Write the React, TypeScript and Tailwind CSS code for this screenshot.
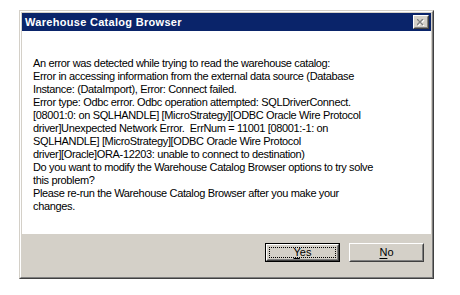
import React from 'react';

// message text, broken exactly as the dialog wraps it
const lines = [
  'An error was detected while trying to read the warehouse catalog:',
  'Error in accessing information from the external data source (Database',
  'Instance: (DataImport), Error: Connect failed.',
  'Error type: Odbc error. Odbc operation attempted: SQLDriverConnect.',
  '[08001:0: on SQLHANDLE] [MicroStrategy][ODBC Oracle Wire Protocol',
  'driver]Unexpected Network Error.  ErrNum = 11001 [08001:-1: on',
  'SQLHANDLE] [MicroStrategy][ODBC Oracle Wire Protocol',
  'driver][Oracle]ORA-12203: unable to connect to destination)',
  'Do you want to modify the Warehouse Catalog Browser options to try solve',
  'this problem?',
  'Please re-run the Warehouse Catalog Browser after you make your',
  'changes.',
];

const font = { fontFamily: '"Liberation Sans", Arial, sans-serif' };

const CloseButton: React.FC = () => (
  <div className="w-[16px] h-[14px] border border-t-white border-l-white border-r-[#404040] border-b-[#404040] bg-[#d4d0c8]">
    <div className="w-full h-full border border-t-[#d4d0c8] border-l-[#d4d0c8] border-r-[#808080] border-b-[#808080] flex items-center justify-center">
      <svg width="8" height="7" viewBox="0 0 8 7">
        <path d="M1 1 L7 7 M7 1 L1 7" stroke="#ffffff" strokeWidth="1.4" />
        <path d="M0 0 L6 6 M6 0 L0 6" stroke="#808080" strokeWidth="1.4" />
      </svg>
    </div>
  </div>
);

const DialogButton: React.FC<{ label: string; hotkey: string; isDefault?: boolean }> = ({ label, hotkey, isDefault }) => {
  const rest = label.slice(1);
  const text = (
    <span className="text-[11px] text-black leading-none">
      <span className="underline underline-offset-2">{hotkey}</span>
      {rest}
    </span>
  );

  if (isDefault) {
    return (
      <div className="w-[75px] h-[19px] border border-black bg-[#d4d0c8]">
        <div className="w-full h-full border border-t-white border-l-white border-r-[#404040] border-b-[#404040]">
          <div className="w-full h-full border border-t-[#d4d0c8] border-l-[#d4d0c8] border-r-[#808080] border-b-[#808080] p-px">
            <div className="w-full h-full border border-dotted border-black flex items-center justify-center">
              {text}
            </div>
          </div>
        </div>
      </div>
    );
  }

  return (
    <div className="w-[75px] h-[19px] border border-t-white border-l-white border-r-[#404040] border-b-[#404040] bg-[#d4d0c8]">
      <div className="w-full h-full border border-t-[#d4d0c8] border-l-[#d4d0c8] border-r-[#808080] border-b-[#808080] flex items-center justify-center">
        {text}
      </div>
    </div>
  );
};

const App: React.FC = () => {
  return (
    <div className="w-[460px] h-[295px] bg-white pt-[10px] pl-[19px]" style={font}>
      {/* window frame */}
      <div className="w-[415px] h-[269px] border border-t-[#d4d0c8] border-l-[#d4d0c8] border-r-[#404040] border-b-[#404040]">
        <div className="w-full h-full border border-t-white border-l-white border-r-[#808080] border-b-[#808080] bg-[#d4d0c8] p-px flex flex-col">
          {/* title bar */}
          <div className="h-[18px] bg-[#0a246a] flex items-center justify-between pl-[3px] pr-[2px]">
            <span className="text-white font-bold text-[11px] leading-none tracking-[0.3px]">Warehouse Catalog Browser</span>
            <CloseButton />
          </div>

          {/* message */}
          <div className="h-[203px] bg-white pt-[26px] pl-[11px]">
            {lines.map((line, i) => (
              <div key={i} className="text-[11px] leading-[13px] text-black whitespace-pre tracking-[-0.35px]">
                {line}
              </div>
            ))}
          </div>

          {/* buttons */}
          <div className="flex-1 flex justify-end gap-[9px] pt-[9px] pr-[7px]">
            <DialogButton label="Yes" hotkey="Y" isDefault />
            <DialogButton label="No" hotkey="N" />
          </div>
        </div>
      </div>
    </div>
  );
};

export default App;
